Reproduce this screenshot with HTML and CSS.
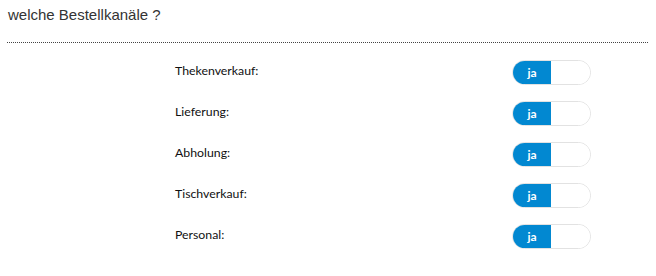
FILE: index.html
```html
<!DOCTYPE html>
<html lang="de">
<head>
    <meta charset="UTF-8">
    <title>Bestellkanäle</title>
    <link rel="stylesheet" href="styles.css">
</head>
<body>
    <div class="panel">
        <h2 class="title">welche Bestellkanäle ?</h2>
        <div class="channels">
            <div class="row">
                <label>Thekenverkauf:</label>
                <div class="toggle"><span class="on">ja</span><span class="off"></span></div>
            </div>
            <div class="row">
                <label>Lieferung:</label>
                <div class="toggle"><span class="on">ja</span><span class="off"></span></div>
            </div>
            <div class="row">
                <label>Abholung:</label>
                <div class="toggle"><span class="on">ja</span><span class="off"></span></div>
            </div>
            <div class="row">
                <label>Tischverkauf:</label>
                <div class="toggle"><span class="on">ja</span><span class="off"></span></div>
            </div>
            <div class="row">
                <label>Personal:</label>
                <div class="toggle"><span class="on">ja</span><span class="off"></span></div>
            </div>
        </div>
    </div>
</body>
</html>
```
FILE: styles.css
```css
body {
    margin: 0;
    background-color: #fff;
    font-family: "Lato", sans-serif;
}

.panel {
    padding: 0 8px 0 7px;
}

.title {
    margin: 0;
    padding: 6px 0 19px 1px;
    font-family: "Liberation Sans", Arial, sans-serif;
    font-size: 15px;
    font-weight: normal;
    color: #333;
    line-height: 17px;
    border-bottom: 1px dotted #444;
}

.channels {
    padding: 17px 0 0 168px;
    width: 416px;
}

.row {
    display: flex;
    justify-content: space-between;
    align-items: flex-start;
    height: 41px;
}

.row label {
    font-size: 12.3px;
    color: #111;
    padding-top: 3px;
}

.toggle {
    display: flex;
    width: 77px;
    height: 23px;
    border: 1px solid #e2e2e2;
    border-radius: 13px;
    overflow: hidden;
}

.toggle .on {
    width: 38px;
    background-color: #0288d1;
    color: #fff;
    font-size: 12px;
    font-weight: bold;
    text-align: center;
    line-height: 23px;
}

.toggle .off {
    flex: 1;
    background-color: #fff;
}
```
